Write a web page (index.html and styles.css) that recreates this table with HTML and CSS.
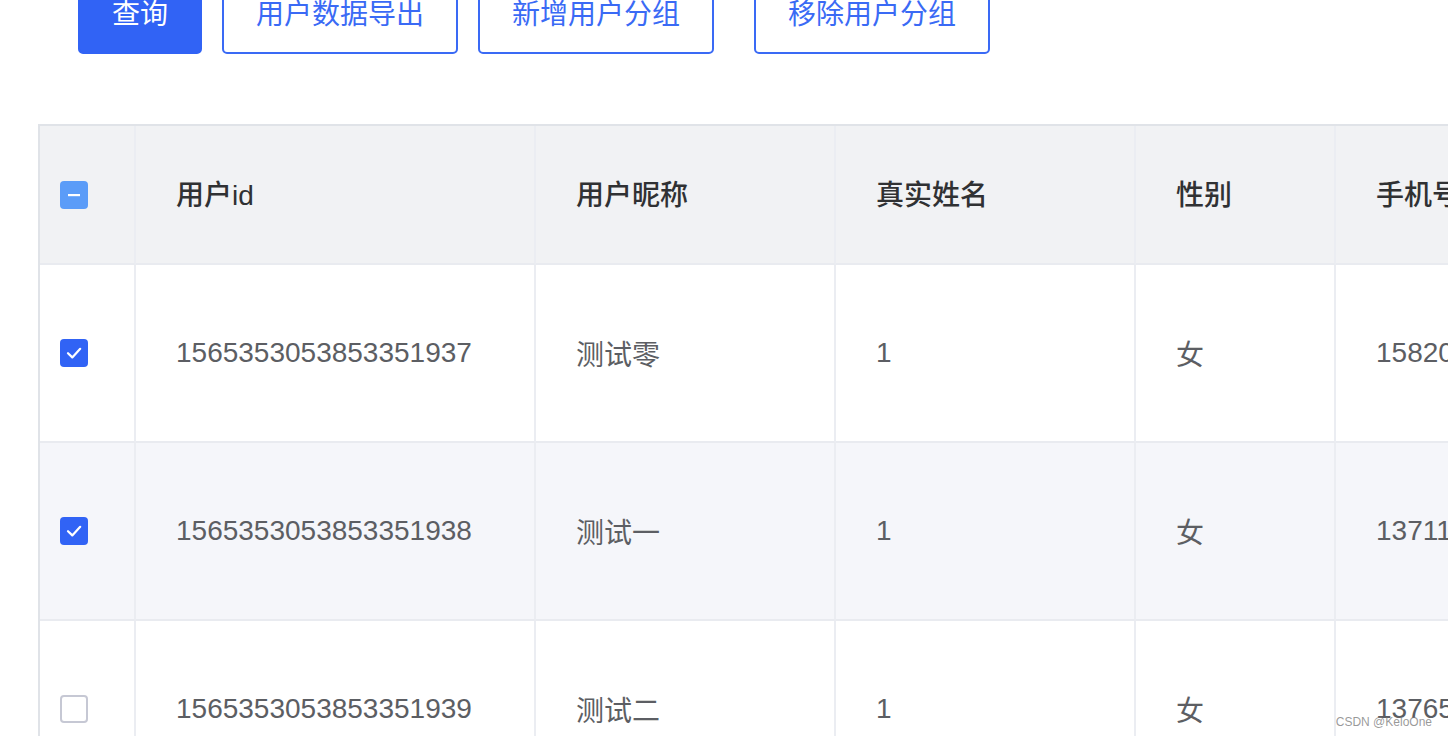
FILE: index.html
```html
<!DOCTYPE html>
<html lang="zh">
<head>
<meta charset="utf-8">
<link rel="stylesheet" href="styles.css">
</head>
<body>
<div class="page">
  <div class="toolbar">
    <button class="btn btn-primary">查询</button>
    <button class="btn">用户数据导出</button>
    <button class="btn">新增用户分组</button>
    <button class="btn btn-gap">移除用户分组</button>
  </div>
  <div class="table-wrap">
    <table class="grid">
      <colgroup>
        <col class="c-check"><col class="c-id"><col class="c-nick"><col class="c-name"><col class="c-sex"><col class="c-phone">
      </colgroup>
      <thead>
        <tr>
          <th class="cell-check"><span class="cb cb-half"><svg viewBox="0 0 28 28" width="28" height="28"><rect x="8" y="13" width="12" height="2.2" fill="#fff"/></svg></span></th>
          <th>用户id</th>
          <th>用户昵称</th>
          <th>真实姓名</th>
          <th>性别</th>
          <th>手机号</th>
        </tr>
      </thead>
      <tbody>
        <tr>
          <td class="cell-check"><span class="cb cb-on"><svg viewBox="0 0 28 28" width="28" height="28"><path d="M8 14.2 L12.3 18.4 L20.2 9.8" fill="none" stroke="#fff" stroke-width="2.2" stroke-linecap="round" stroke-linejoin="round"/></svg></span></td>
          <td>1565353053853351937</td>
          <td>测试零</td>
          <td>1</td>
          <td>女</td>
          <td>15820000000</td>
        </tr>
        <tr class="stripe">
          <td class="cell-check"><span class="cb cb-on"><svg viewBox="0 0 28 28" width="28" height="28"><path d="M8 14.2 L12.3 18.4 L20.2 9.8" fill="none" stroke="#fff" stroke-width="2.2" stroke-linecap="round" stroke-linejoin="round"/></svg></span></td>
          <td>1565353053853351938</td>
          <td>测试一</td>
          <td>1</td>
          <td>女</td>
          <td>13711000000</td>
        </tr>
        <tr>
          <td class="cell-check"><span class="cb cb-off"></span></td>
          <td>1565353053853351939</td>
          <td>测试二</td>
          <td>1</td>
          <td>女</td>
          <td>13765000000</td>
        </tr>
      </tbody>
    </table>
  </div>
  <div class="watermark">CSDN @KeloOne</div>
</div>
</body>
</html>
```
FILE: styles.css
```css
html, body {
  margin: 0;
  padding: 0;
  background: #fff;
  overflow: hidden;
}
body {
  width: 1448px;
  height: 736px;
  font-family: "Liberation Sans", "Noto Sans CJK SC", sans-serif;
}
.page {
  position: relative;
  width: 1448px;
  height: 736px;
  overflow: hidden;
}
.toolbar {
  display: flex;
  gap: 20px;
  margin-top: -24px;
  padding-left: 78px;
}
.btn {
  font-family: "Liberation Sans", "Noto Sans CJK SC", sans-serif;
  font-size: 28px;
  line-height: 28px;
  padding: 23px 32px;
  border: 2px solid #3a6af5;
  border-radius: 5px;
  background: #fff;
  color: #3a6af5;
  white-space: nowrap;
}
.btn-primary {
  background: #3163f5;
  border-color: #3163f5;
  color: #fff;
}
.btn-gap {
  margin-left: 20px;
}
.table-wrap {
  margin-top: 70px;
  margin-left: 38px;
  border-top: 2px solid #e0e3e8;
  border-left: 2px solid #e0e3e8;
}
.grid {
  table-layout: fixed;
  border-collapse: separate;
  border-spacing: 0;
  width: 1598px;
  font-size: 28px;
}
.c-check { width: 96px; }
.c-id { width: 400px; }
.c-nick { width: 300px; }
.c-name { width: 300px; }
.c-sex { width: 200px; }
.c-phone { width: 302px; }
.grid th, .grid td {
  text-align: left;
  padding: 0 0 0 40px;
  border-right: 2px solid #ebedf2;
  border-bottom: 2px solid #e9ebf0;
  white-space: nowrap;
  overflow: hidden;
}
.grid th {
  height: 139px;
  padding-bottom: 3px;
  box-sizing: border-box;
  background: #f1f2f4;
  color: #303133;
  font-weight: 500;
}
.grid td {
  height: 176px;
  color: #5c5e63;
}
.grid tr.stripe td {
  background: #f5f6fa;
}
.grid .cell-check {
  padding-left: 20px;
}
.grid th.cell-check {
  padding-bottom: 0;
}
.cb {
  display: block;
  width: 28px;
  height: 28px;
  box-sizing: border-box;
  border-radius: 4px;
}
.cb svg { display: block; }
.cb-half { background: #5b9cf8; }
.cb-on { background: #3163f5; }
.cb-off {
  background: #fff;
  border: 2px solid #c6c8d4;
}
.watermark {
  position: absolute;
  right: 16px;
  bottom: 7px;
  font-size: 12px;
  color: rgba(120, 120, 120, 0.75);
  font-family: "Liberation Sans", sans-serif;
}
```
